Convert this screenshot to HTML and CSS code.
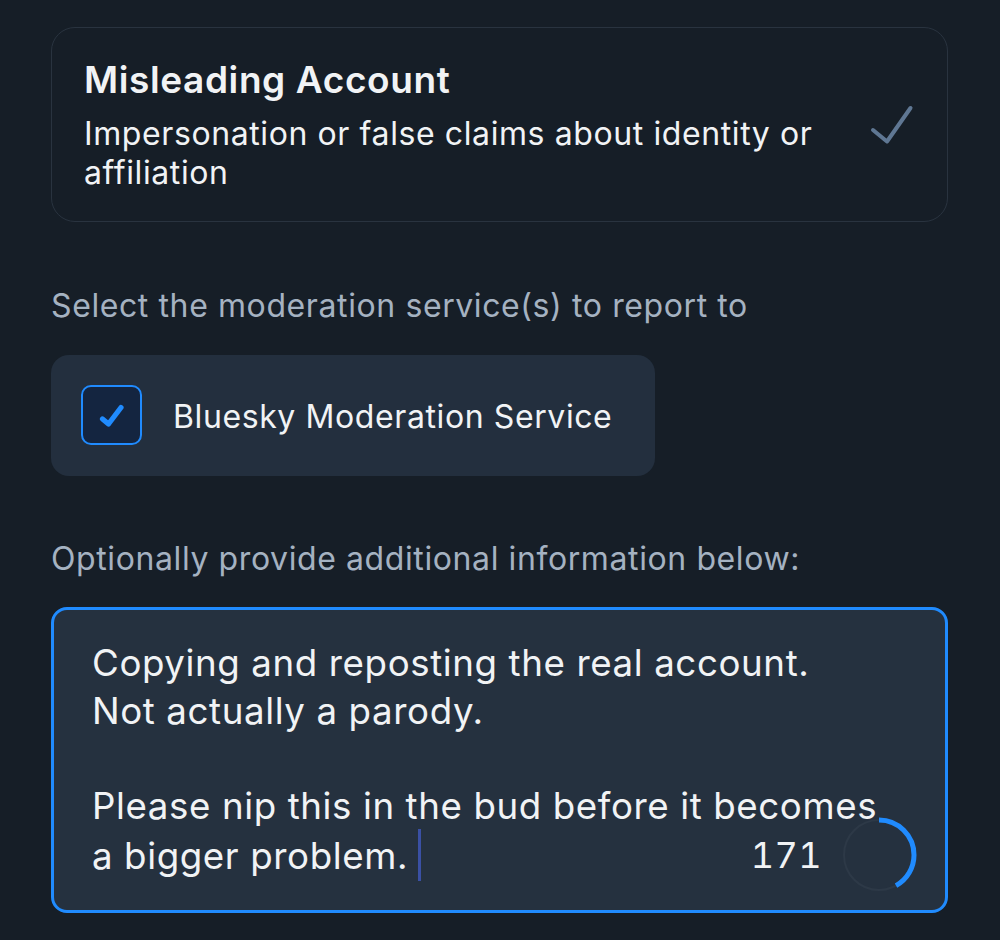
FILE: index.html
```html
<!DOCTYPE html>
<html lang="en">
  <head>
    <meta charset="UTF-8" />
    <meta name="viewport" content="width=device-width, initial-scale=1.0" />
    <title>Report Account</title>
    <link rel="stylesheet" href="styles.css">
  </head>
  <body>
    <div class="report">
      <!-- Motivo selezionato -->
      <div class="reason-card">
        <div class="reason-text">
          <div class="reason-title">Misleading Account</div>
          <div class="reason-desc">Impersonation or false claims about identity or affiliation</div>
        </div>
        <svg class="reason-check" width="46" height="42" viewBox="0 0 46 42">
          <path d="M4 26 L18 37.5 L41.5 4" fill="none" stroke="#5f7793" stroke-width="4" stroke-linecap="round" stroke-linejoin="round" />
        </svg>
      </div>

      <p class="section-label label-services">Select the moderation service(s) to report to</p>

      <div class="service-row">
        <div class="checkbox">
          <svg width="30" height="30" viewBox="0 0 30 30">
            <path d="M5.5 19 L11.5 24 L24 7.5" fill="none" stroke="#208bfe" stroke-width="5.2" stroke-linecap="round" stroke-linejoin="round" />
          </svg>
        </div>
        <span class="service-name">Bluesky Moderation Service</span>
      </div>

      <p class="section-label label-details">Optionally provide additional information below:</p>

      <div class="details-box">
        <div class="details-text">Copying and reposting the real account.<br>Not actually a parody.<br><br>Please nip this in the bud before it becomes<br>a bigger problem.<span class="caret"></span></div>
        <div class="counter">
          <span class="counter-num">171</span>
          <svg class="counter-ring" width="78" height="78" viewBox="0 0 78 78">
            <circle cx="39" cy="39" r="35" fill="none" stroke="#2d3947" stroke-width="2" />
            <circle cx="39" cy="39" r="35" fill="none" stroke="#208bfe" stroke-width="5"
              stroke-dasharray="92 220" transform="rotate(-90 39 39)" />
          </svg>
        </div>
      </div>
    </div>
  </body>
</html>
```

FILE: styles.css
```css
body,
html {
  margin: 0;
  padding: 0;
  background-color: #161e27;
  font-family: "Inter", "Liberation Sans", sans-serif;
  color: #f1f3f5;
  letter-spacing: 0.6px;
}

.report {
  padding: 27px 52px 0 51px;
}

/* Card del motivo */
.reason-card {
  display: flex;
  align-items: center;
  justify-content: space-between;
  border: 1px solid #29333f;
  border-radius: 24px;
  padding: 30px 32px 29px 32px;
}

.reason-title {
  font-size: 37px;
  font-weight: 600;
  line-height: 44px;
  margin-bottom: 12px;
}

.reason-desc {
  font-size: 32px;
  line-height: 39px;
  max-width: 760px;
}

.reason-check {
  flex-shrink: 0;
}

.section-label {
  margin: 0;
  font-size: 32px;
  line-height: 38px;
  color: #a5b2c1;
}

.label-services {
  margin-top: 65px;
}

.label-details {
  margin-top: 64px;
}

/* Servizio di moderazione */
.service-row {
  display: flex;
  align-items: center;
  gap: 31px;
  width: 604px;
  height: 121px;
  box-sizing: border-box;
  padding: 2px 0 0 30px;
  margin-top: 30px;
  background-color: #232f3e;
  border-radius: 18px;
}

.checkbox {
  width: 61px;
  height: 60px;
  margin-top: -3px;
  box-sizing: border-box;
  border: 2.5px solid #208bfe;
  border-radius: 10px;
  background-color: #142540;
  display: flex;
  align-items: center;
  justify-content: center;
}

.service-name {
  font-size: 32px;
  line-height: 38px;
}

/* Campo di testo */
.details-box {
  position: relative;
  margin-top: 29px;
  height: 306px;
  box-sizing: border-box;
  border: 3px solid #208bfe;
  border-radius: 16px;
  background-color: #25313f;
  padding: 29px 38px 0 38px;
}

.details-text {
  font-size: 36.7px;
  line-height: 47.5px;
}

.caret {
  display: inline-block;
  width: 3px;
  height: 52px;
  margin-left: 10px;
  vertical-align: -12px;
  background-color: #3a50a4;
}

/* Contatore caratteri */
.counter {
  position: absolute;
  right: 27px;
  bottom: 16px;
  display: flex;
  align-items: center;
  gap: 18px;
}

.counter-num {
  font-size: 36px;
  font-variant-numeric: tabular-nums;
  letter-spacing: 0.4px;
}
```
